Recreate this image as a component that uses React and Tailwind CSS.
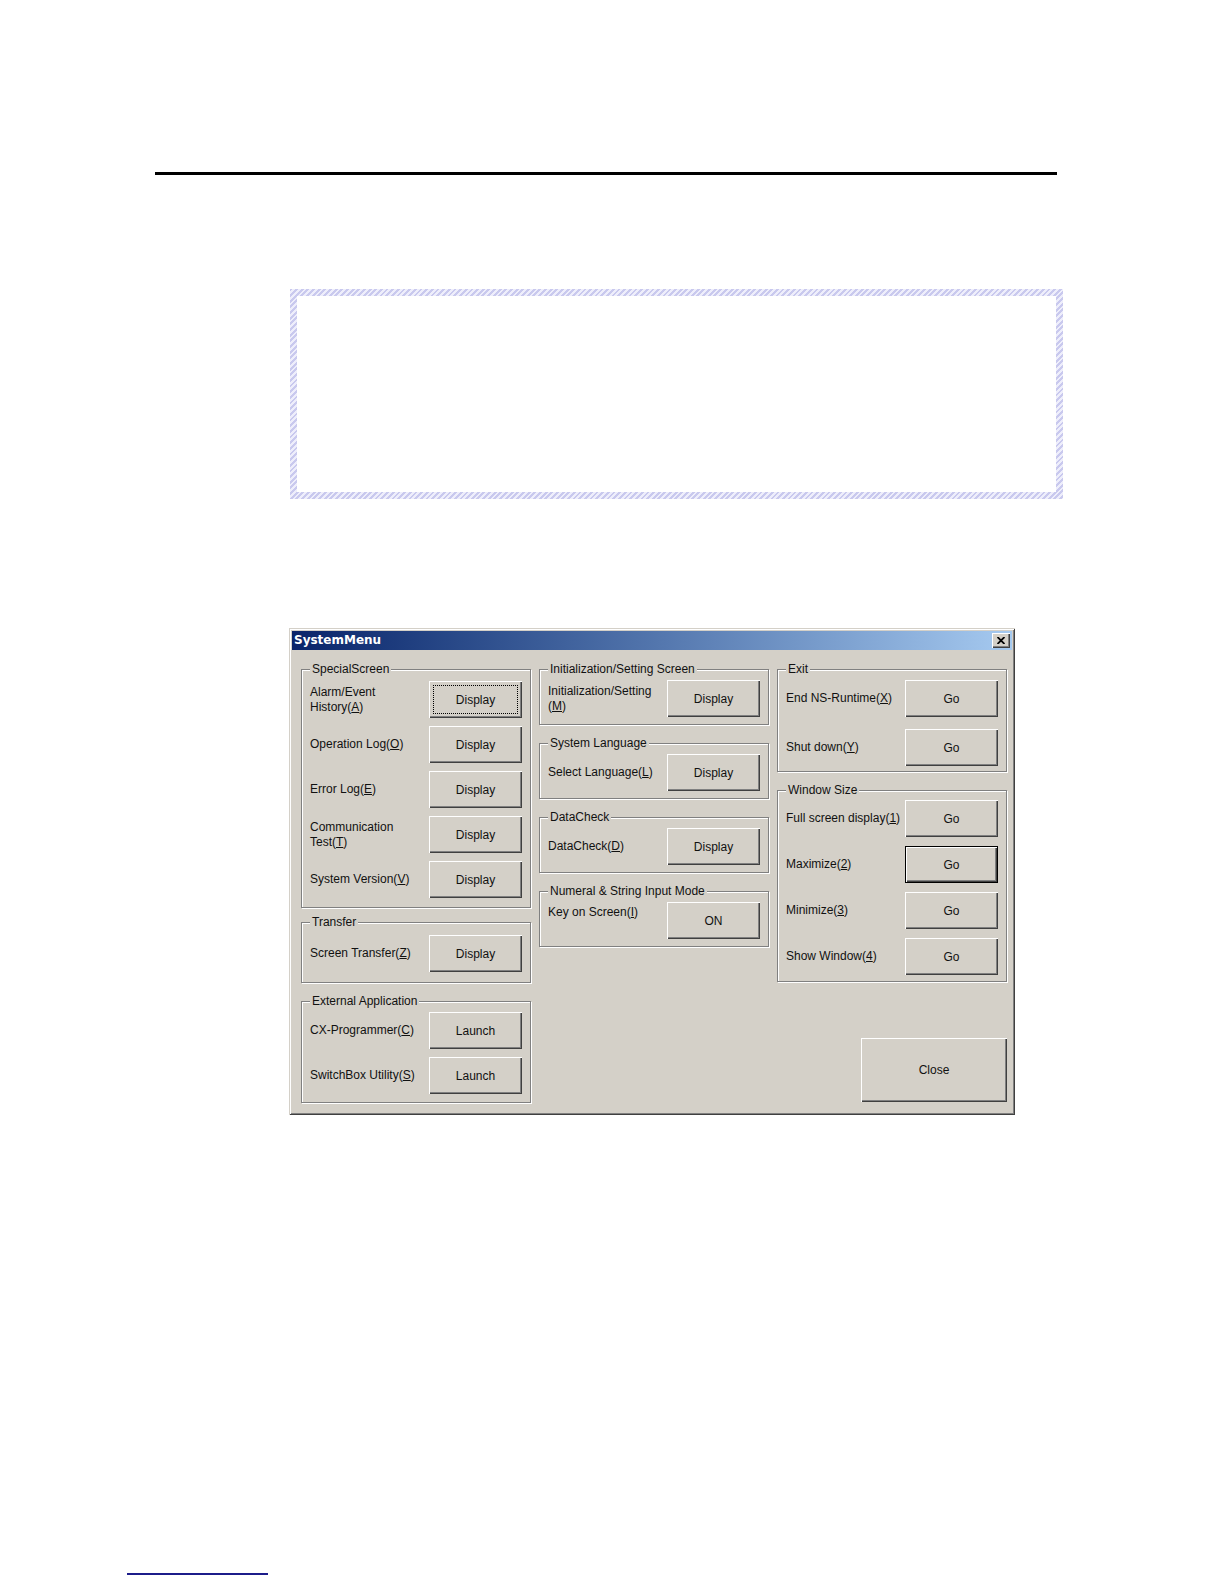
import React from "react";

const bevel =
  "shadow-[inset_1px_1px_0_#fff,inset_-1px_-1px_0_#404040,inset_-2px_-2px_0_#808080]";

function Mn({ children }) {
  return <u className="underline underline-offset-[1px]">{children}</u>;
}

function Btn({ label, kind, className = "" }) {
  if (kind === "default") {
    return (
      <div className={`w-[93px] h-[37px] border border-black flex shrink-0 ${className}`}>
        <div className={`flex-1 flex items-center justify-center ${bevel}`}>{label}</div>
      </div>
    );
  }
  if (kind === "focus") {
    return (
      <div className={`w-[93px] h-[37px] p-[4px] flex shrink-0 ${bevel} ${className}`}>
        <div className="flex-1 border border-dotted border-black flex items-center justify-center">
          {label}
        </div>
      </div>
    );
  }
  return (
    <div
      className={`w-[93px] h-[37px] flex items-center justify-center shrink-0 ${bevel} ${className}`}
    >
      {label}
    </div>
  );
}

function Row({ children, button, top }) {
  return (
    <div
      className={`flex justify-between h-[37px] ${top ? "items-start" : "items-center"}`}
    >
      <div className={`leading-[15px] ${top ? "pt-[3px]" : ""}`}>{children}</div>
      {button}
    </div>
  );
}

function Group({ title, className = "", children }) {
  return (
    <div
      className={`relative border border-[#808080] shadow-[inset_1px_1px_0_#fff,1px_1px_0_#fff] px-[8px] flex flex-col ${className}`}
    >
      <span className="absolute -top-[8px] left-[8px] bg-[#d4d0c8] px-[2px] leading-[15px]">
        {title}
      </span>
      {children}
    </div>
  );
}

function SystemMenu() {
  return (
    <div
      className="mt-[129px] ml-[289px] w-[726px] p-[3px] bg-[#d4d0c8] flex flex-col text-[12px] text-[#111] shadow-[inset_1px_1px_0_#d4d0c8,inset_-1px_-1px_0_#404040,inset_2px_2px_0_#fff,inset_-2px_-2px_0_#808080]"
    >
      <div className="h-[19px] bg-linear-to-r from-[#0a246a] to-[#a6caf0] flex items-center justify-between pl-[2px] pr-[2px]">
        <span className="text-white font-bold text-[12px] font-['DejaVu_Sans',Verdana,sans-serif] leading-[19px]">
          SystemMenu
        </span>
        <div className={`w-[18px] h-[15px] bg-[#d4d0c8] flex items-center justify-center pr-[1px] pb-[1px] ${bevel}`}>
          <svg width="8" height="7" viewBox="0 0 8 7">
            <path d="M0.5 0 L7.5 7 M7.5 0 L0.5 7" stroke="#000" strokeWidth="1.8" />
          </svg>
        </div>
      </div>

      <div className="flex gap-[8px] pt-[19px] pl-[9px] pr-[5px] pb-[9px]">
        {/* column 1 */}
        <div className="w-[230px] flex flex-col">
          <Group title="SpecialScreen" className="pt-[11px] pb-[9px] gap-[8px]">
            <Row button={<Btn label="Display" kind="focus" />}>
              Alarm/Event
              <br />
              History(<Mn>A</Mn>)
            </Row>
            <Row button={<Btn label="Display" />}>
              Operation Log(<Mn>O</Mn>)
            </Row>
            <Row button={<Btn label="Display" />}>
              Error Log(<Mn>E</Mn>)
            </Row>
            <Row button={<Btn label="Display" />}>
              Communication
              <br />
              Test(<Mn>T</Mn>)
            </Row>
            <Row button={<Btn label="Display" />}>
              System Version(<Mn>V</Mn>)
            </Row>
          </Group>
          <Group title="Transfer" className="mt-[14px] pt-[12px] pb-[10px]">
            <Row button={<Btn label="Display" />}>
              Screen Transfer(<Mn>Z</Mn>)
            </Row>
          </Group>
          <Group title="External Application" className="mt-[18px] pt-[10px] pb-[8px] gap-[8px]">
            <Row button={<Btn label="Launch" />}>
              CX-Programmer(<Mn>C</Mn>)
            </Row>
            <Row button={<Btn label="Launch" />}>
              SwitchBox Utility(<Mn>S</Mn>)
            </Row>
          </Group>
        </div>

        {/* column 2 */}
        <div className="w-[230px] flex flex-col">
          <Group title="Initialization/Setting Screen" className="pt-[10px] pb-[7px]">
            <Row button={<Btn label="Display" />}>
              Initialization/Setting
              <br />
              (<Mn>M</Mn>)
            </Row>
          </Group>
          <Group title="System Language" className="mt-[18px] pt-[10px] pb-[7px]">
            <Row button={<Btn label="Display" />}>
              Select Language(<Mn>L</Mn>)
            </Row>
          </Group>
          <Group title="DataCheck" className="mt-[18px] pt-[10px] pb-[7px]">
            <Row button={<Btn label="Display" />}>
              DataCheck(<Mn>D</Mn>)
            </Row>
          </Group>
          <Group title="Numeral & String Input Mode" className="mt-[18px] pt-[10px] pb-[7px]">
            <Row top button={<Btn label="ON" />}>
              Key on Screen(<Mn>I</Mn>)
            </Row>
          </Group>
        </div>

        {/* column 3 */}
        <div className="w-[230px] flex flex-col">
          <Group title="Exit" className="pt-[10px] pb-[5px] gap-[12px]">
            <Row button={<Btn label="Go" />}>
              End NS-Runtime(<Mn>X</Mn>)
            </Row>
            <Row button={<Btn label="Go" />}>
              Shut down(<Mn>Y</Mn>)
            </Row>
          </Group>
          <Group title="Window Size" className="mt-[18px] pt-[9px] pb-[6px] gap-[9px]">
            <Row button={<Btn label="Go" />}>
              Full screen display(<Mn>1</Mn>)
            </Row>
            <Row button={<Btn label="Go" kind="default" />}>
              Maximize(<Mn>2</Mn>)
            </Row>
            <Row button={<Btn label="Go" />}>
              Minimize(<Mn>3</Mn>)
            </Row>
            <Row button={<Btn label="Go" />}>
              Show Window(<Mn>4</Mn>)
            </Row>
          </Group>
          <div
            className={`mt-[56px] self-end w-[146px] h-[64px] flex items-center justify-center ${bevel}`}
          >
            Close
          </div>
        </div>
      </div>
    </div>
  );
}

export default function App() {
  return (
    <div className="w-[1224px] h-[1584px] bg-white flex flex-col font-['Liberation_Sans',Arial,sans-serif]">
      <div className="mt-[172px] ml-[155px] w-[902px] h-[3px] bg-black" />
      <div className="mt-[114px] ml-[290px] w-[773px] h-[210px] p-[7px] flex bg-[repeating-linear-gradient(135deg,#c9c9ee_0_2px,#eeeefb_2px_4px)]">
        <div className="flex-1 bg-white" />
      </div>
      <SystemMenu />
      <div className="mt-auto mb-[9px] ml-[127px] w-[141px] h-[2px] bg-[#1c1c8a]" />
    </div>
  );
}
